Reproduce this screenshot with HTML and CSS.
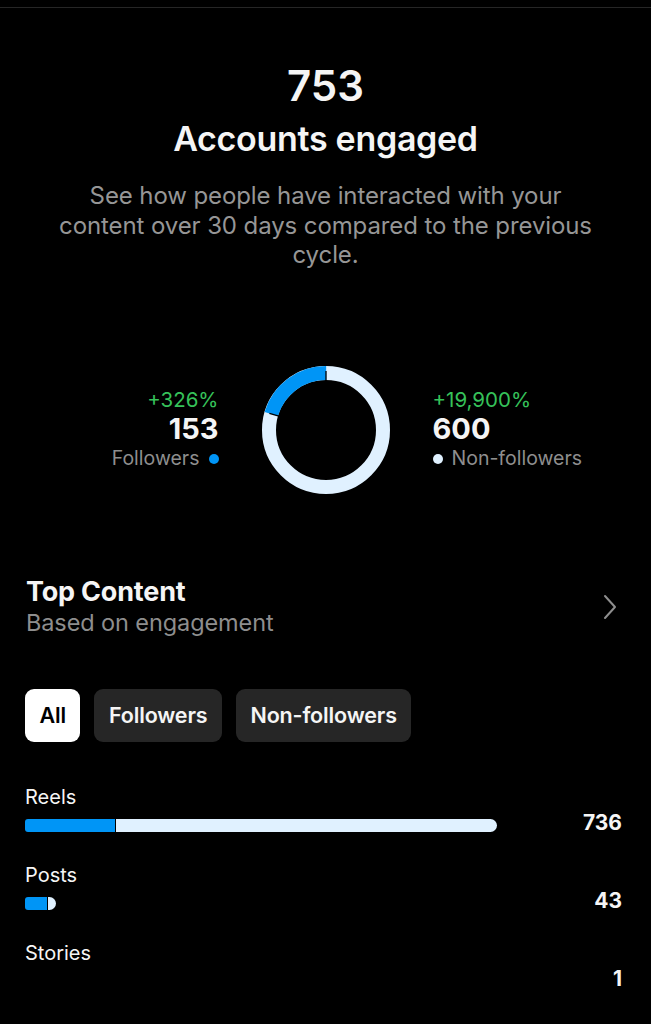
FILE: index.html
```html
<!DOCTYPE html>
<html>
<head>
<meta charset="utf-8">
<link rel="stylesheet" href="styles.css">
</head>
<body>
<div class="topline"></div>
<section class="hero">
  <div class="big">753</div>
  <div class="title">Accounts engaged</div>
  <p class="desc">See how people have interacted with your content over 30 days compared to the previous cycle.</p>
</section>

<section class="split">
  <div class="stat left">
    <div class="pct">+326%</div>
    <div class="num">153</div>
    <div class="lbl">Followers <span class="dot blue"></span></div>
  </div>
  <svg class="donut" width="130" height="130" viewBox="0 0 130 130">
    <circle cx="65" cy="65" r="57" fill="none" stroke="#e0f1ff" stroke-width="14"/>
    <circle cx="65" cy="65" r="57" fill="none" stroke="#0095f6" stroke-width="14" stroke-dasharray="73.2 400" transform="rotate(-163.6 65 65)"/>
    <line x1="65" y1="6" x2="65" y2="24" stroke="#000" stroke-width="1.3"/>
    <line x1="65" y1="6" x2="65" y2="24" stroke="#000" stroke-width="1.3" transform="rotate(-73.6 65 65)"/>
  </svg>
  <div class="stat right">
    <div class="pct">+19,900%</div>
    <div class="num">600</div>
    <div class="lbl"><span class="dot light"></span> Non-followers</div>
  </div>
</section>

<section class="top">
  <div class="top-text">
    <div class="top-title">Top Content</div>
    <div class="top-sub">Based on engagement</div>
  </div>
  <svg class="chev" width="14" height="26" viewBox="0 0 14 26"><path d="M2 2 L12 13 L2 24" fill="none" stroke="#8e8e8e" stroke-width="2" stroke-linecap="round" stroke-linejoin="round"/></svg>
</section>

<div class="pills">
  <span class="pill active">All</span>
  <span class="pill">Followers</span>
  <span class="pill">Non-followers</span>
</div>

<section class="bars">
  <div class="row">
    <div class="rlabel">Reels</div>
    <div class="rbar">
      <div class="track">
        <span class="seg f" style="width:90px"></span><span class="seg n" style="width:381px"></span>
      </div>
      <div class="val">736</div>
    </div>
  </div>
  <div class="row">
    <div class="rlabel">Posts</div>
    <div class="rbar">
      <div class="track">
        <span class="seg f" style="width:22px"></span><span class="seg n" style="width:8px"></span>
      </div>
      <div class="val">43</div>
    </div>
  </div>
  <div class="row">
    <div class="rlabel">Stories</div>
    <div class="rbar">
      <div class="track"></div>
      <div class="val">1</div>
    </div>
  </div>
</section>
</body>
</html>
```

FILE: styles.css
```css
* { box-sizing: border-box; }
html, body { margin: 0; padding: 0; background: #000; }
body {
  font-family: Inter, "Noto Sans", "Liberation Sans", sans-serif;
  color: #f5f5f5;
  width: 651px;
  min-height: 1024px;
}
.topline { height: 1px; margin-top: 7px; background: #262626; }

.hero { text-align: center; padding: 0 40px; }
.big { margin-top: 54px; font-size: 42px; line-height: 48px; font-weight: 600; }
.title { margin-top: 10px; font-size: 34px; line-height: 38px; font-weight: 600; letter-spacing: -0.3px; }
.desc { margin: 23px 0 0; font-size: 24px; line-height: 29.5px; color: #969696; padding: 0 13px; letter-spacing: -0.1px; }

.split { display: flex; justify-content: center; align-items: center; gap: 42px; margin-top: 95px; height: 130px; }
.stat { width: 150px; display: flex; flex-direction: column; }
.stat.left { align-items: flex-end; text-align: right; }
.stat.right { align-items: flex-start; }
.pct { color: #36c25a; font-size: 20.5px; line-height: 29px; }
.num { font-size: 29px; line-height: 29px; font-weight: 700; }
.lbl { color: #8e8e8e; font-size: 19.5px; line-height: 31px; display: flex; align-items: center; gap: 9px; }
.dot { width: 10px; height: 10px; border-radius: 50%; display: inline-block; }
.dot.blue { background: #0095f6; }
.dot.light { background: #e0f1ff; }
.donut { display: block; flex: none; }

.top { display: flex; align-items: center; justify-content: space-between; padding: 0 34px 0 26px; margin-top: 81px; }
.top-title { font-size: 27px; line-height: 32px; font-weight: 700; letter-spacing: -0.2px; }
.top-sub { font-size: 23.5px; line-height: 30px; color: #8e8e8e; margin-top: 0; letter-spacing: -0.1px; }

.pills { display: flex; gap: 14px; padding: 0 25px; margin-top: 51px; }
.pill { height: 53px; display: flex; align-items: center; padding: 0 14.5px; border-radius: 9px; background: #262626; color: #f5f5f5; font-size: 21.5px; font-weight: 600; letter-spacing: -0.15px; }
.pill.active { background: #fff; color: #000; }

.bars { padding: 0 29px 0 25px; margin-top: 43px; }
.row { margin-bottom: 31px; }
.rlabel { font-size: 20px; line-height: 24px; }
.rbar { display: flex; align-items: center; margin-top: 10px; height: 13px; }
.track { width: 472px; height: 13px; display: flex; }
.seg { height: 13px; display: block; }
.seg.f { background: #0095f6; border-radius: 3px 0 0 3px; margin-right: 1px; }
.seg.n { background: #e0f1ff; border-radius: 0 7px 7px 0; }
.val { flex: 1; text-align: right; font-size: 21px; font-weight: 700; line-height: 24px; margin-top: -4px; }
```
